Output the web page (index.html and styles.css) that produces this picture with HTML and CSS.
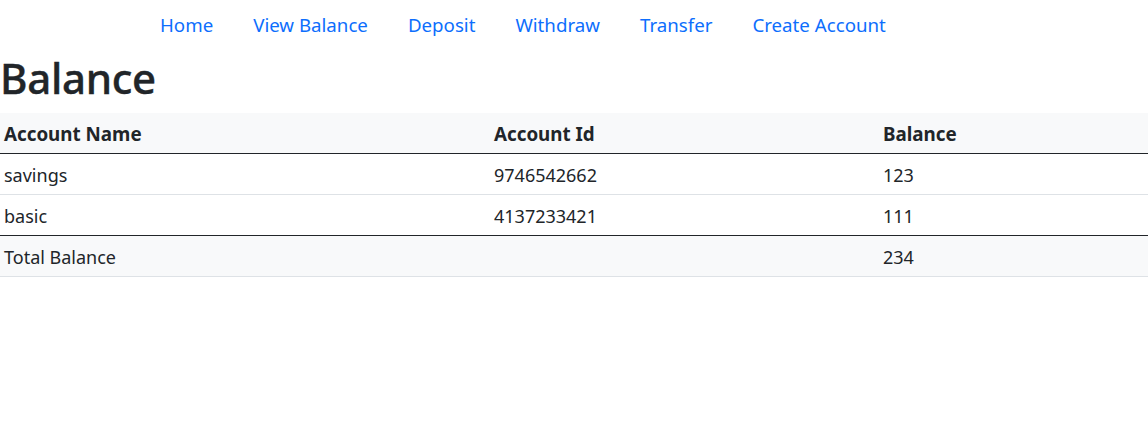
FILE: index.html
```html
<!DOCTYPE html>
<html>
<head>
<meta charset="utf-8">
<link rel="stylesheet" href="styles.css">
</head>
<body>
<nav class="nav">
  <a class="nav-link" href="#">Home</a>
  <a class="nav-link" href="#">View Balance</a>
  <a class="nav-link" href="#">Deposit</a>
  <a class="nav-link" href="#">Withdraw</a>
  <a class="nav-link" href="#">Transfer</a>
  <a class="nav-link" href="#">Create Account</a>
</nav>
<h1 class="title">Balance</h1>
<table class="table">
  <thead>
    <tr><th class="c1">Account Name</th><th class="c2">Account Id</th><th class="c3">Balance</th></tr>
  </thead>
  <tbody>
    <tr><td>savings</td><td>9746542662</td><td>123</td></tr>
    <tr><td>basic</td><td>4137233421</td><td>111</td></tr>
  </tbody>
  <tfoot>
    <tr><td>Total Balance</td><td></td><td>234</td></tr>
  </tfoot>
</table>
</body>
</html>
```
FILE: styles.css
```css
html, body {
  margin: 0;
  padding: 0;
  background: #fff;
}
body {
  font-family: "Noto Sans", "Open Sans", sans-serif;
  font-size: 16px;
  line-height: 24px;
  color: #212529;
}
.nav {
  display: flex;
  gap: 40px;
  padding: 13px 0 0 160px;
  height: 37px;
  box-sizing: content-box;
}
.nav-link {
  color: #0d6efd;
  text-decoration: none;
  font-size: 18.7px;
  line-height: 24px;
}
.title {
  margin: 0;
  padding: 2px 0 0 0;
  font-size: 42px;
  font-weight: 500;
  line-height: 52px;
  height: 61px;
  letter-spacing: -0.3px;
  -webkit-text-stroke: 0.4px #212529;
}
.table {
  width: 1148px;
  border-collapse: collapse;
  table-layout: fixed;
}
.c1 { width: 482px; }
.c2 { width: 381px; }
.c3 { width: auto; }
.table th, .table td {
  text-align: left;
  padding: 9px 4px 7px 4px;
  font-size: 18px;
  line-height: 24px;
  height: 24px;
}
.table th {
  font-weight: 700;
  font-size: 18.8px;
}
.table thead tr {
  background: #f8f9fa;
  border-bottom: 1px solid #212529;
}
.table tbody tr {
  border-bottom: 1px solid #dee2e6;
}
.table tbody tr:last-child {
  border-bottom: 1px solid #212529;
}
.table tfoot tr {
  background: #f8f9fa;
  border-bottom: 1px solid #dee2e6;
}
```
